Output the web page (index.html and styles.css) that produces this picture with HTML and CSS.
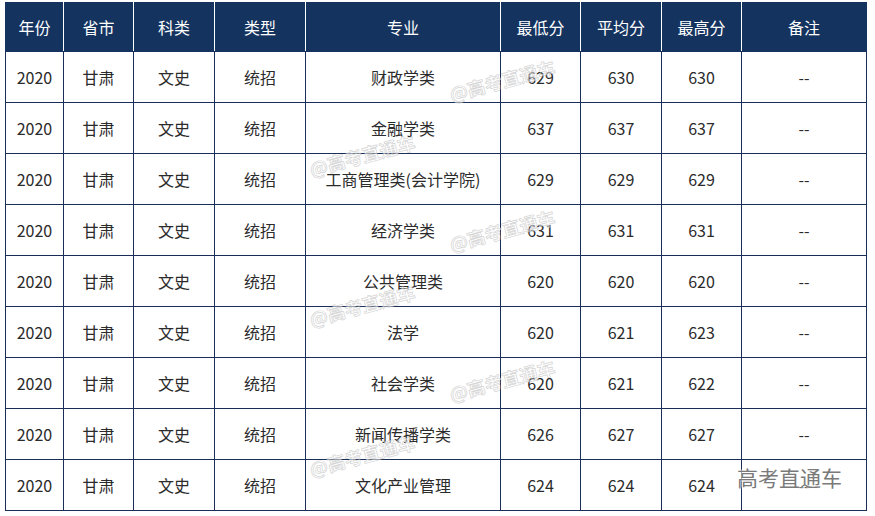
FILE: index.html
```html
<!DOCTYPE html>
<html lang="zh">
<head>
<meta charset="utf-8">
<link rel="stylesheet" href="styles.css">
</head>
<body>
<div class="page">
  <table class="scores">
    <colgroup>
      <col class="c1"><col class="c2"><col class="c3"><col class="c4"><col class="c5">
      <col class="c6"><col class="c7"><col class="c8"><col class="c9">
    </colgroup>
    <thead>
      <tr><th>年份</th><th>省市</th><th>科类</th><th>类型</th><th>专业</th><th>最低分</th><th>平均分</th><th>最高分</th><th>备注</th></tr>
    </thead>
    <tbody>
      <tr><td>2020</td><td>甘肃</td><td>文史</td><td>统招</td><td>财政学类</td><td>629</td><td>630</td><td>630</td><td>--</td></tr>
      <tr><td>2020</td><td>甘肃</td><td>文史</td><td>统招</td><td>金融学类</td><td>637</td><td>637</td><td>637</td><td>--</td></tr>
      <tr><td>2020</td><td>甘肃</td><td>文史</td><td>统招</td><td>工商管理类(会计学院)</td><td>629</td><td>629</td><td>629</td><td>--</td></tr>
      <tr><td>2020</td><td>甘肃</td><td>文史</td><td>统招</td><td>经济学类</td><td>631</td><td>631</td><td>631</td><td>--</td></tr>
      <tr><td>2020</td><td>甘肃</td><td>文史</td><td>统招</td><td>公共管理类</td><td>620</td><td>620</td><td>620</td><td>--</td></tr>
      <tr><td>2020</td><td>甘肃</td><td>文史</td><td>统招</td><td>法学</td><td>620</td><td>621</td><td>623</td><td>--</td></tr>
      <tr><td>2020</td><td>甘肃</td><td>文史</td><td>统招</td><td>社会学类</td><td>620</td><td>621</td><td>622</td><td>--</td></tr>
      <tr><td>2020</td><td>甘肃</td><td>文史</td><td>统招</td><td>新闻传播学类</td><td>626</td><td>627</td><td>627</td><td>--</td></tr>
      <tr><td>2020</td><td>甘肃</td><td>文史</td><td>统招</td><td>文化产业管理</td><td>624</td><td>624</td><td>624</td><td>--</td></tr>
    </tbody>
  </table>
  <span class="wm wm1">@高考直通车</span>
  <span class="wm wm2">@高考直通车</span>
  <span class="wm wm3">@高考直通车</span>
  <span class="wm wm4">@高考直通车</span>
  <span class="wm wm5">@高考直通车</span>
  <span class="wm wm6">@高考直通车</span>
  <span class="brand">高考直通车</span>
</div>
</body>
</html>
```

FILE: styles.css
```css
html, body {
  margin: 0;
  padding: 0;
  background: #ffffff;
}
.page {
  position: relative;
  width: 875px;
  height: 516px;
  padding: 2px 0 0 5px;
  box-sizing: border-box;
  font-family: "Noto Sans CJK SC", "Noto Sans", sans-serif;
}
.scores {
  border-collapse: collapse;
  table-layout: fixed;
  width: 861px;
  font-size: 16px;
  color: #2b2b2b;
}
.c1 { width: 58px; }
.c2 { width: 70px; }
.c3 { width: 81px; }
.c4 { width: 91px; }
.c5 { width: 195px; }
.c6 { width: 80px; }
.c7 { width: 81px; }
.c8 { width: 80px; }
.c9 { width: 125px; }
.scores th {
  background: #14335f;
  color: #ffffff;
  font-weight: normal;
  height: 48px;
  padding: 0;
  text-align: center;
  border: 1px solid #14335f;
  border-left-color: #ffffff;
  border-right-color: #ffffff;
}
.scores th:first-child { border-left-color: #14335f; }
.scores th:last-child { border-right-color: #14335f; }
.scores td {
  height: 50px;
  padding: 0;
  text-align: center;
  border: 1px solid #1a2f57;
}
.wm {
  position: absolute;
  width: 120px;
  height: 24px;
  line-height: 24px;
  text-align: center;
  font-size: 18px;
  font-weight: bold;
  color: rgba(255, 255, 255, 0.55);
  -webkit-text-stroke: 0.8px rgba(175, 175, 175, 0.5);
  transform: rotate(-15deg);
  white-space: nowrap;
}
.wm1 { left: 442px; top: 68px; }
.wm2 { left: 302px; top: 143px; }
.wm3 { left: 442px; top: 218px; }
.wm4 { left: 302px; top: 293px; }
.wm5 { left: 442px; top: 368px; }
.wm6 { left: 302px; top: 443px; }
.brand {
  position: absolute;
  left: 737px;
  top: 463px;
  font-size: 21px;
  line-height: 28px;
  color: #7a7a7a;
  text-shadow: 0 0 2px #ffffff, 0 0 2px #ffffff;
  white-space: nowrap;
}
```
